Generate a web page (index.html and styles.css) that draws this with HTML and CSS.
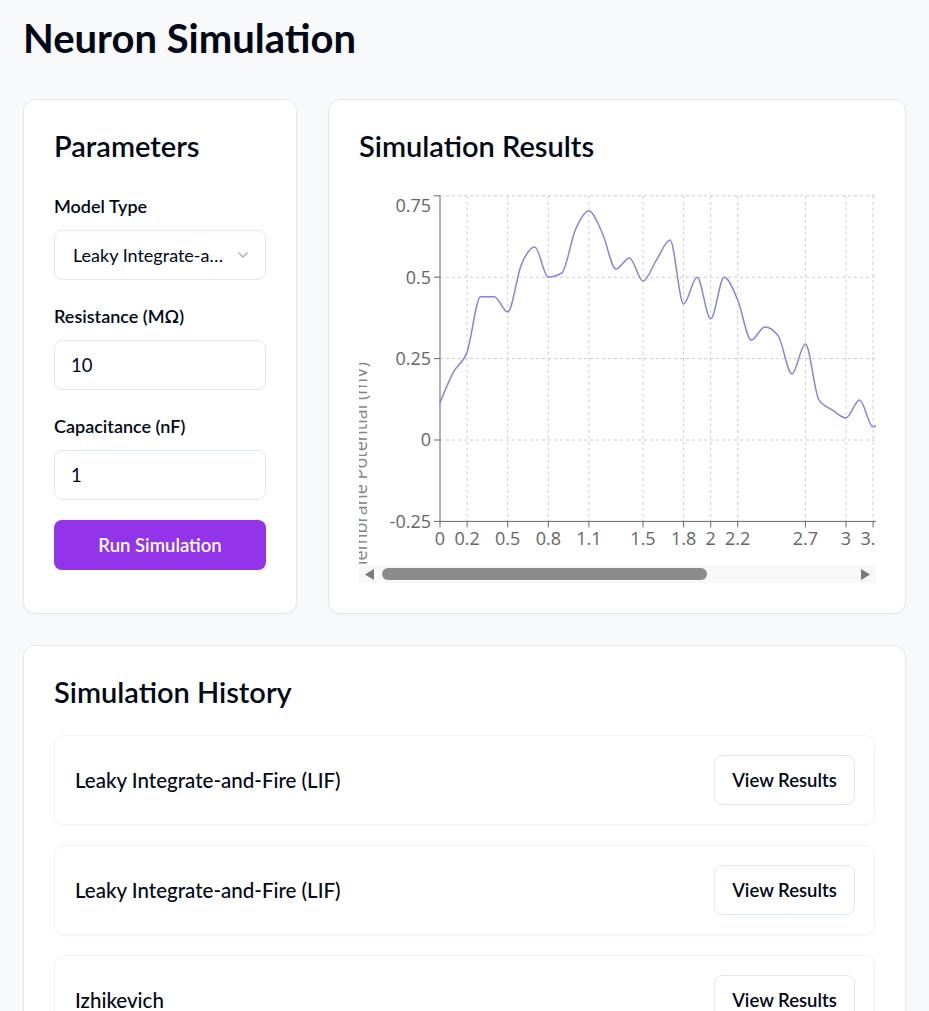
FILE: index.html
```html
<!DOCTYPE html>
<html lang="en">
<head>
<meta charset="utf-8">
<title>Neuron Simulation</title>
<link rel="stylesheet" href="styles.css">
</head>
<body>
<main class="page">
  <h1 class="page-title">Neuron Simulation</h1>
  <div class="top-grid">
    <section class="card params">
      <h2 class="card-title">Parameters</h2>
      <div class="field">
        <label class="field-label">Model Type</label>
        <button class="control select" type="button">
          <span class="select-value">Leaky Integrate-and-Fire (LIF)</span>
          <svg class="chevron" viewBox="0 0 24 24" fill="none" stroke="currentColor" stroke-width="2" stroke-linecap="round" stroke-linejoin="round"><path d="m6 9 6 6 6-6"/></svg>
        </button>
      </div>
      <div class="field">
        <label class="field-label" for="resistance">Resistance (MΩ)</label>
        <input class="control" id="resistance" type="text" value="10">
      </div>
      <div class="field field-last">
        <label class="field-label" for="capacitance">Capacitance (nF)</label>
        <input class="control" id="capacitance" type="text" value="1">
      </div>
      <button class="run-btn" type="button">Run Simulation</button>
    </section>

    <section class="card results">
      <h2 class="card-title">Simulation Results</h2>
      <div class="chart-box">
        <svg class="chart" viewBox="0 0 517 379" width="517" height="379">
          <g class="grid">
            <line x1="81" y1="9.8" x2="530" y2="9.8"/>
            <line x1="81" y1="91.2" x2="530" y2="91.2"/>
            <line x1="81" y1="172.6" x2="530" y2="172.6"/>
            <line x1="81" y1="254" x2="530" y2="254"/>
            <line x1="108.1" y1="9.8" x2="108.1" y2="335.4"/>
            <line x1="148.7" y1="9.8" x2="148.7" y2="335.4"/>
            <line x1="189.3" y1="9.8" x2="189.3" y2="335.4"/>
            <line x1="229.9" y1="9.8" x2="229.9" y2="335.4"/>
            <line x1="284" y1="9.8" x2="284" y2="335.4"/>
            <line x1="324.6" y1="9.8" x2="324.6" y2="335.4"/>
            <line x1="351.7" y1="9.8" x2="351.7" y2="335.4"/>
            <line x1="378.7" y1="9.8" x2="378.7" y2="335.4"/>
            <line x1="446.4" y1="9.8" x2="446.4" y2="335.4"/>
            <line x1="487" y1="9.8" x2="487" y2="335.4"/>
            <line x1="514.1" y1="9.8" x2="514.1" y2="335.4"/>
          </g>
          <g class="axis">
            <line x1="81" y1="9.8" x2="81" y2="335.4"/>
            <line x1="81" y1="335.4" x2="530" y2="335.4"/>
            <line x1="75" y1="9.8" x2="81" y2="9.8"/>
            <line x1="75" y1="91.2" x2="81" y2="91.2"/>
            <line x1="75" y1="172.6" x2="81" y2="172.6"/>
            <line x1="75" y1="254" x2="81" y2="254"/>
            <line x1="75" y1="335.4" x2="81" y2="335.4"/>
            <line x1="81" y1="335.4" x2="81" y2="341.4"/>
            <line x1="108.1" y1="335.4" x2="108.1" y2="341.4"/>
            <line x1="148.7" y1="335.4" x2="148.7" y2="341.4"/>
            <line x1="189.3" y1="335.4" x2="189.3" y2="341.4"/>
            <line x1="229.9" y1="335.4" x2="229.9" y2="341.4"/>
            <line x1="284" y1="335.4" x2="284" y2="341.4"/>
            <line x1="324.6" y1="335.4" x2="324.6" y2="341.4"/>
            <line x1="351.7" y1="335.4" x2="351.7" y2="341.4"/>
            <line x1="378.7" y1="335.4" x2="378.7" y2="341.4"/>
            <line x1="446.4" y1="335.4" x2="446.4" y2="341.4"/>
            <line x1="487" y1="335.4" x2="487" y2="341.4"/>
            <line x1="514.1" y1="335.4" x2="514.1" y2="341.4"/>
          </g>
          <g class="y-ticks">
            <text x="72" y="26.2">0.75</text>
            <text x="72" y="97.6">0.5</text>
            <text x="72" y="179">0.25</text>
            <text x="72" y="260.4">0</text>
            <text x="72" y="341.8">-0.25</text>
          </g>
          <g class="x-ticks">
            <text x="81" y="359">0</text>
            <text x="108.1" y="359">0.2</text>
            <text x="148.7" y="359">0.5</text>
            <text x="189.3" y="359">0.8</text>
            <text x="229.9" y="359">1.1</text>
            <text x="284" y="359">1.5</text>
            <text x="324.6" y="359">1.8</text>
            <text x="351.7" y="359">2</text>
            <text x="378.7" y="359">2.2</text>
            <text x="446.4" y="359">2.7</text>
            <text x="487" y="359">3</text>
            <text x="514.1" y="359">3.2</text>
          </g>
          <text class="axis-label y-label" transform="translate(8 176) rotate(-90)">Membrane Potential (mV)</text>
          <text class="axis-label x-label" x="375" y="392">Time (ms)</text>
          <path id="voltage-line" class="line" d=""/>
        </svg>
        <div class="scrollbar">
          <svg class="scroll-arrow" viewBox="0 0 9 11" width="9" height="11"><polygon points="9,0 9,11 0,5.5"/></svg>
          <div class="scroll-thumb"></div>
          <div class="scroll-track"></div>
          <svg class="scroll-arrow" viewBox="0 0 9 11" width="9" height="11"><polygon points="0,0 0,11 9,5.5"/></svg>
        </div>
      </div>
    </section>
  </div>

  <section class="card history">
    <h2 class="card-title">Simulation History</h2>
    <div class="history-list">
      <div class="history-row">
        <span class="row-title">Leaky Integrate-and-Fire (LIF)</span>
        <button class="view-btn" type="button">View Results</button>
      </div>
      <div class="history-row">
        <span class="row-title">Leaky Integrate-and-Fire (LIF)</span>
        <button class="view-btn" type="button">View Results</button>
      </div>
      <div class="history-row">
        <span class="row-title">Izhikevich</span>
        <button class="view-btn" type="button">View Results</button>
      </div>
    </div>
  </section>
</main>
<script src="chart.js"></script>
</body>
</html>
```

FILE: styles.css
```css
* { box-sizing: border-box; }

body {
  margin: 0;
  background: #f8f9fb;
  font-family: Lato, "Noto Sans", "Liberation Sans", sans-serif;
  color: #020817;
}

.page {
  padding: 14px 23px 24px;
}

.page-title {
  margin: 0 0 37px;
  font-size: 40px;
  line-height: 48px;
  font-weight: 700;
}

.top-grid {
  display: grid;
  grid-template-columns: 274px minmax(0, 1fr);
  gap: 31px;
  margin-bottom: 31px;
}

.card {
  background: #fff;
  border: 1px solid #e5e7eb;
  border-radius: 12px;
  box-shadow: 0 1px 2px rgba(0, 0, 0, 0.04);
  padding: 30px;
}

.card-title {
  margin: 0 0 33px;
  font-size: 29px;
  line-height: 32px;
  font-weight: 600;
}

.results .card-title { margin-bottom: 24px; }
.history .card-title { margin-bottom: 27px; }

.field { margin-bottom: 25px; }
.field-last { margin-bottom: 20px; }

.field-label {
  display: block;
  font-size: 18px;
  line-height: 22px;
  font-weight: 600;
  margin-bottom: 13px;
}

.control {
  display: block;
  width: 100%;
  height: 50px;
  border: 1px solid #e2e8f0;
  border-radius: 8px;
  background: #fff;
  font-family: inherit;
  font-size: 18.5px;
  color: #020817;
  padding: 0 16px;
  outline: none;
}

.select {
  display: flex;
  align-items: center;
  justify-content: space-between;
  padding: 0 14px 0 18px;
  text-align: left;
}

.select-value {
  overflow: hidden;
  text-overflow: ellipsis;
  white-space: nowrap;
  font-size: 18px;
}

.chevron {
  flex: none;
  width: 16px;
  height: 16px;
  margin-left: 2px;
  color: #64748b;
  opacity: 0.6;
}

.run-btn {
  display: block;
  width: 100%;
  height: 50px;
  border: none;
  border-radius: 8px;
  background: #9333ea;
  color: #fff;
  font-family: inherit;
  font-size: 18.5px;
  font-weight: 600;
}

/* chart */
.chart-box {
  margin-right: -1px;
}

.chart {
  display: block;
  width: 100%;
  height: 379px;
  overflow: hidden;
}

.grid line {
  stroke: #cccccc;
  stroke-width: 1;
  stroke-dasharray: 3 3;
}

.axis line {
  stroke: #666666;
  stroke-width: 1;
}

.y-ticks text,
.x-ticks text,
.axis-label {
  font-family: "Open Sans", "Noto Sans", sans-serif;
  font-size: 18px;
  fill: #666666;
}

.y-ticks text { text-anchor: end; }
.x-ticks text { text-anchor: middle; }

.y-label {
  text-anchor: end;
  fill: #858585;
}

.x-label {
  text-anchor: middle;
  fill: #858585;
}

.line {
  fill: none;
  stroke: #8884d8;
  stroke-width: 1.5;
}

.scrollbar {
  display: flex;
  align-items: center;
  height: 18px;
  background: #f8f8f8;
  padding: 0 6px;
}

.scroll-arrow {
  flex: none;
  fill: #7a7a7a;
}

.scroll-thumb {
  flex: none;
  width: 325px;
  height: 12px;
  margin-left: 8px;
  border-radius: 6px;
  background: #8b8b8b;
}

.scroll-track { flex: 1; }

/* history */
.history-list {
  display: flex;
  flex-direction: column;
  gap: 20px;
}

.history-row {
  display: flex;
  align-items: center;
  justify-content: space-between;
  padding: 19px;
  border: 1px solid #f1f3f6;
  border-radius: 10px;
  box-shadow: 0 1px 3px rgba(0, 0, 0, 0.04);
}

.row-title {
  padding-left: 1px;
  font-size: 20.5px;
  font-weight: 500;
}

.view-btn {
  height: 50px;
  width: 141px;
  padding: 0;
  border: 1px solid #e2e8f0;
  border-radius: 8px;
  background: #fff;
  font-family: inherit;
  font-size: 18.5px;
  font-weight: 600;
  color: #020817;
}
```

FILE: chart.js
```js
(function () {
  var data = [0.114, 0.209, 0.27, 0.44, 0.44, 0.393, 0.537, 0.593, 0.5, 0.513,
    0.645, 0.703, 0.635, 0.525, 0.559, 0.488, 0.553, 0.614, 0.418, 0.5,
    0.372, 0.5, 0.43, 0.307, 0.347, 0.319, 0.203, 0.295, 0.123, 0.092,
    0.068, 0.123, 0.04, 0.1];
  var x0 = 81, kx = 135.33, y0 = 254, ky = 325.6;
  var pts = data.map(function (v, i) { return [x0 + i * 0.1 * kx, y0 - v * ky]; });
  function sign(x) { return x < 0 ? -1 : 1; }
  function slope3(p0, p1, p2) {
    var h0 = p1[0] - p0[0], h1 = p2[0] - p1[0];
    var s0 = (p1[1] - p0[1]) / h0, s1 = (p2[1] - p1[1]) / h1;
    var p = (s0 * h1 + s1 * h0) / (h0 + h1);
    return (sign(s0) + sign(s1)) * Math.min(Math.abs(s0), Math.abs(s1), 0.5 * Math.abs(p)) || 0;
  }
  var n = pts.length, t = new Array(n);
  for (var i = 1; i < n - 1; i++) t[i] = slope3(pts[i - 1], pts[i], pts[i + 1]);
  var h = pts[1][0] - pts[0][0];
  t[0] = (3 * (pts[1][1] - pts[0][1]) / h - t[1]) / 2;
  h = pts[n - 1][0] - pts[n - 2][0];
  t[n - 1] = (3 * (pts[n - 1][1] - pts[n - 2][1]) / h - t[n - 2]) / 2;
  var d = 'M' + pts[0][0].toFixed(2) + ',' + pts[0][1].toFixed(2);
  for (var j = 0; j < n - 1; j++) {
    var a = pts[j], b = pts[j + 1], dx = (b[0] - a[0]) / 3;
    d += 'C' + (a[0] + dx).toFixed(2) + ',' + (a[1] + dx * t[j]).toFixed(2) + ',' +
      (b[0] - dx).toFixed(2) + ',' + (b[1] - dx * t[j + 1]).toFixed(2) + ',' +
      b[0].toFixed(2) + ',' + b[1].toFixed(2);
  }
  document.getElementById('voltage-line').setAttribute('d', d);
})();
```
